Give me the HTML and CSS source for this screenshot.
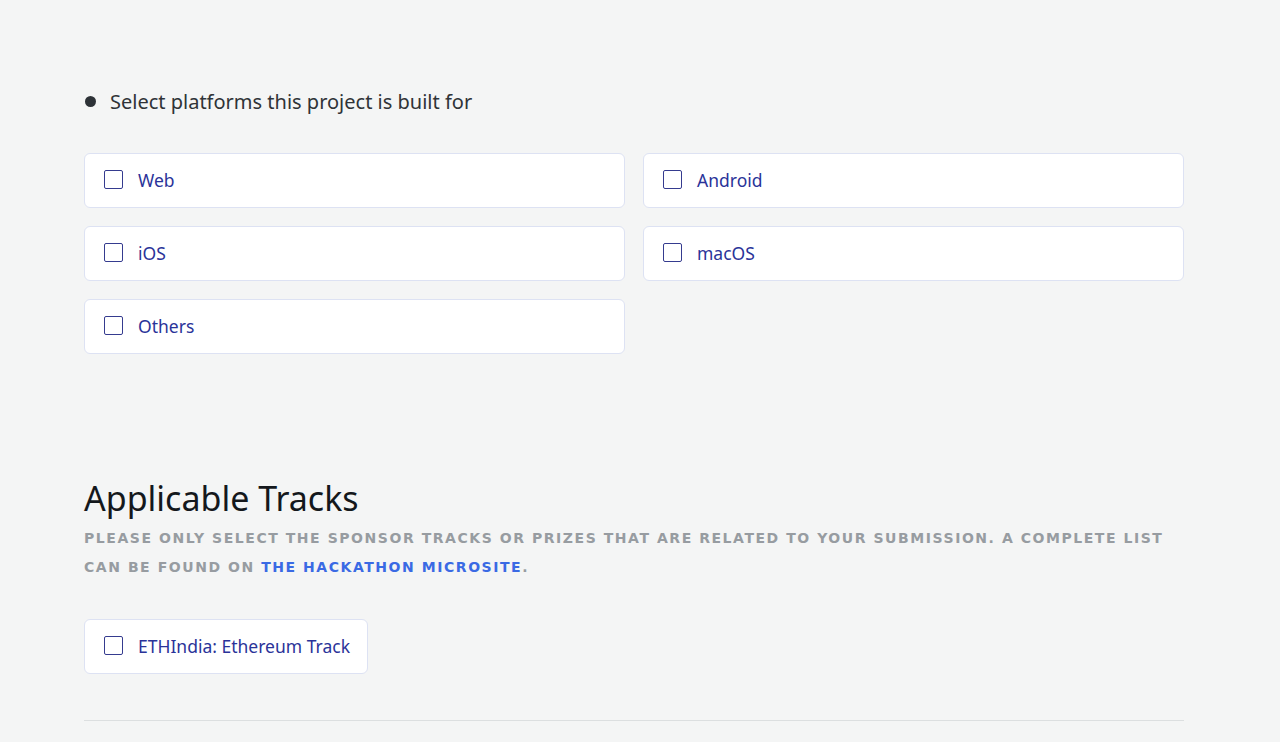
FILE: index.html
```html
<!DOCTYPE html>
<html>
<head>
<meta charset="utf-8">
<link rel="stylesheet" href="styles.css">
</head>
<body>
<main class="page">
  <section class="platforms">
    <div class="question"><span class="dot"></span><span>Select platforms this project is built for</span></div>
    <div class="grid">
      <label class="option"><span class="box"></span><span class="label">Web</span></label>
      <label class="option"><span class="box"></span><span class="label">Android</span></label>
      <label class="option"><span class="box"></span><span class="label">iOS</span></label>
      <label class="option"><span class="box"></span><span class="label">macOS</span></label>
      <label class="option"><span class="box"></span><span class="label">Others</span></label>
    </div>
  </section>
  <section class="tracks">
    <h2 class="title">Applicable Tracks</h2>
    <p class="hint">Please only select the sponsor tracks or prizes that are related to your submission. A complete list can be found on <a href="#" class="link">the hackathon microsite</a>.</p>
    <div class="track-list">
      <label class="option track"><span class="box"></span><span class="label">ETHIndia: Ethereum Track</span></label>
    </div>
  </section>
  <hr class="divider">
</main>
</body>
</html>
```
FILE: styles.css
```css
html, body {
  margin: 0;
  padding: 0;
  background: #f4f5f5;
  font-family: "Noto Sans", "Open Sans", sans-serif;
}
.page {
  width: 1100px;
  padding: 84px 0 0 84px;
}
.question {
  display: flex;
  align-items: center;
  gap: 14px;
  font-size: 20px;
  color: #2f3337;
  height: 34px;
}
.dot {
  width: 11px;
  height: 11px;
  border-radius: 50%;
  background: #2d3237;
  margin-left: 1px;
}
.grid {
  margin-top: 35px;
  display: grid;
  grid-template-columns: 1fr 1fr;
  gap: 18px;
}
.option {
  display: flex;
  align-items: center;
  background: #fff;
  border: 1px solid #dde2f3;
  border-radius: 6px;
  padding: 0 19px 2px;
  box-sizing: content-box;
}
.grid .option {
  height: 51px;
}
.box {
  width: 17px;
  height: 17px;
  border: 1.5px solid #353b8f;
  border-radius: 2px;
  margin-right: 15px;
  flex: none;
}
.label {
  font-size: 17.5px;
  color: #2a3399;
}
.tracks {
  margin-top: 124px;
}
.title {
  margin: 0;
  font-weight: 400;
  font-size: 34px;
  color: #14181c;
  line-height: 40px;
}
.hint {
  margin: 6px 0 0;
  text-transform: uppercase;
  font-family: "DejaVu Sans", sans-serif;
  font-weight: 700;
  font-size: 14px;
  letter-spacing: 1.55px;
  line-height: 29px;
  color: #979ca1;
}
.link {
  color: #3a6ae4;
  text-decoration: none;
}
.track-list {
  margin-top: 37px;
  display: flex;
}
.track {
  height: 51px;
  padding-right: 17px;
}
.divider {
  margin: 46px 0 0;
  border: 0;
  border-top: 1px solid #dcdfe0;
}
```
